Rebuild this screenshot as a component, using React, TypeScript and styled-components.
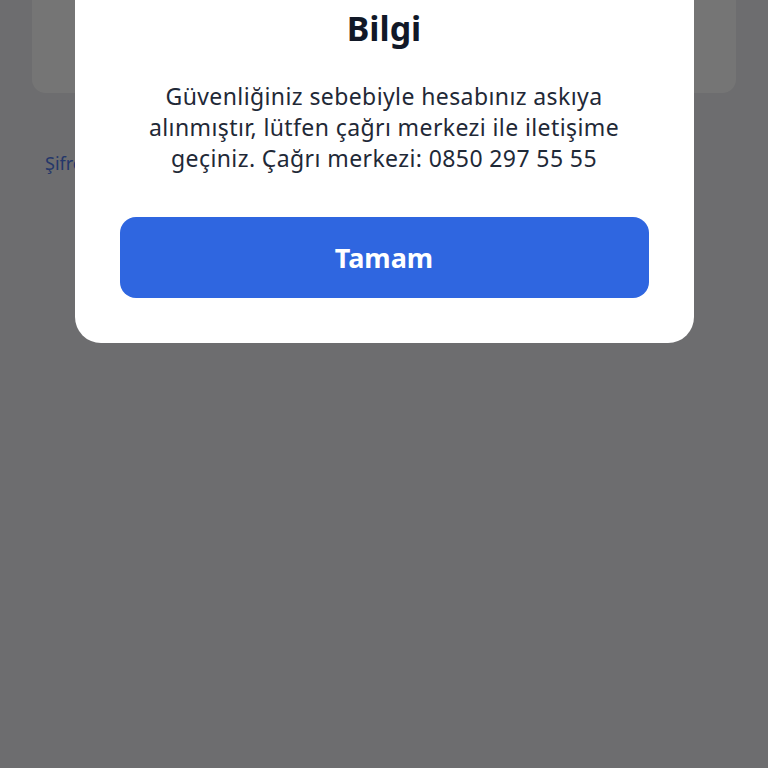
import React from "react";
import styled, { createGlobalStyle } from "styled-components";

const GlobalStyle = createGlobalStyle`
  html, body {
    margin: 0;
    padding: 0;
  }
  body {
    font-family: "Noto Sans", "Open Sans", sans-serif;
    background: #eeeef2;
  }
`;

const Page = styled.div`
  min-height: 100vh;
  padding: 0 32px;
  box-sizing: border-box;
`;

const TopCard = styled.div`
  height: 93px;
  background: #ffffff;
  border-radius: 0 0 14px 14px;
`;

const ForgotLink = styled.a`
  display: block;
  margin: 58px 0 0 13px;
  font-size: 18px;
  line-height: 24px;
  color: #5078e6;
  text-decoration: none;
`;

const Overlay = styled.div`
  position: fixed;
  inset: 0;
  background: rgba(0, 0, 0, 0.54);
  display: flex;
  justify-content: center;
  align-items: flex-start;
`;

const Dialog = styled.div`
  width: 619px;
  margin-top: -39px;
  padding: 45px;
  box-sizing: border-box;
  background: #ffffff;
  border-radius: 26px;
  display: flex;
  flex-direction: column;
  align-items: stretch;
  text-align: center;
`;

const Title = styled.h2`
  margin: 0;
  font-size: 34px;
  line-height: 44px;
  font-weight: 700;
  color: #111827;
`;

const Message = styled.p`
  margin: 31px 0 43px;
  font-size: 23px;
  line-height: 31px;
  letter-spacing: 0.4px;
  color: #1f2937;
`;

const PrimaryButton = styled.button`
  height: 81px;
  border: none;
  border-radius: 16px;
  background: #2f66e0;
  color: #ffffff;
  font-family: inherit;
  font-size: 27px;
  font-weight: 700;
  cursor: pointer;
`;

const App: React.FC = () => {
  return (
    <>
      <GlobalStyle />
      <Page>
        <TopCard />
        <ForgotLink href="#">Şifremi Unuttum</ForgotLink>
      </Page>
      <Overlay>
        <Dialog>
          <Title>Bilgi</Title>
          <Message>
            Güvenliğiniz sebebiyle hesabınız askıya alınmıştır, lütfen çağrı
            merkezi ile iletişime geçiniz. Çağrı merkezi: 0850 297 55 55
          </Message>
          <PrimaryButton>Tamam</PrimaryButton>
        </Dialog>
      </Overlay>
    </>
  );
};

export default App;
